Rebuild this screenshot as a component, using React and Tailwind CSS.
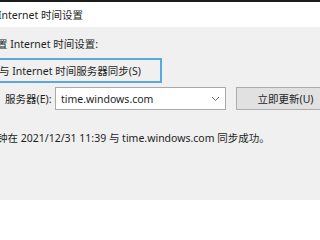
export default function App() {
  return (
    <div
      className="w-[320px] h-[200px] overflow-hidden bg-[#f0f0f0] text-[10.5px] leading-[14px] text-[#1e1e1e] whitespace-nowrap"
      style={{ fontFamily: '"Noto Sans", "Noto Sans CJK SC", sans-serif' }}
    >
      {/* window frame edge + title bar */}
      <div className="h-[2px] bg-[#1c1c1c]" />
      <div className="h-[25px] bg-white flex items-center">
        <span className="-ml-[2px]">Internet 时间设置</span>
      </div>

      {/* dialog body */}
      <div className="pt-[10px]">
        <div className="-ml-[3px]">置 Internet 时间设置:</div>

        <div className="mt-[7px] -ml-[12px] w-[174px] h-[25px] border-2 border-[#5aa8dc] flex items-center pl-[9px]">
          与 Internet 时间服务器同步(S)
        </div>

        <div className="mt-[4px] flex items-center h-[23px]">
          <span className="pl-[5px] w-[55px] shrink-0">服务器(E):</span>
          <div className="w-[171px] h-[23px] shrink-0 bg-white border border-[#a9a9a9] flex items-center justify-between pl-[5px] pr-[5px]">
            <span>time.windows.com</span>
            <svg width="9" height="6" viewBox="0 0 9 6" className="text-[#6b6b6b]">
              <polyline points="1,1 4.5,4.5 8,1" fill="none" stroke="currentColor" strokeWidth="1" />
            </svg>
          </div>
          <div className="ml-[10px] w-[99px] h-[23px] shrink-0 bg-[#e1e1e1] border border-[#adadad] flex items-center justify-center">
            立即更新(U)
          </div>
        </div>

        <div className="mt-[21px] -ml-[3px]">钟在 2021/12/31 11:39 与 time.windows.com 同步成功。</div>
      </div>
    </div>
  );
}
